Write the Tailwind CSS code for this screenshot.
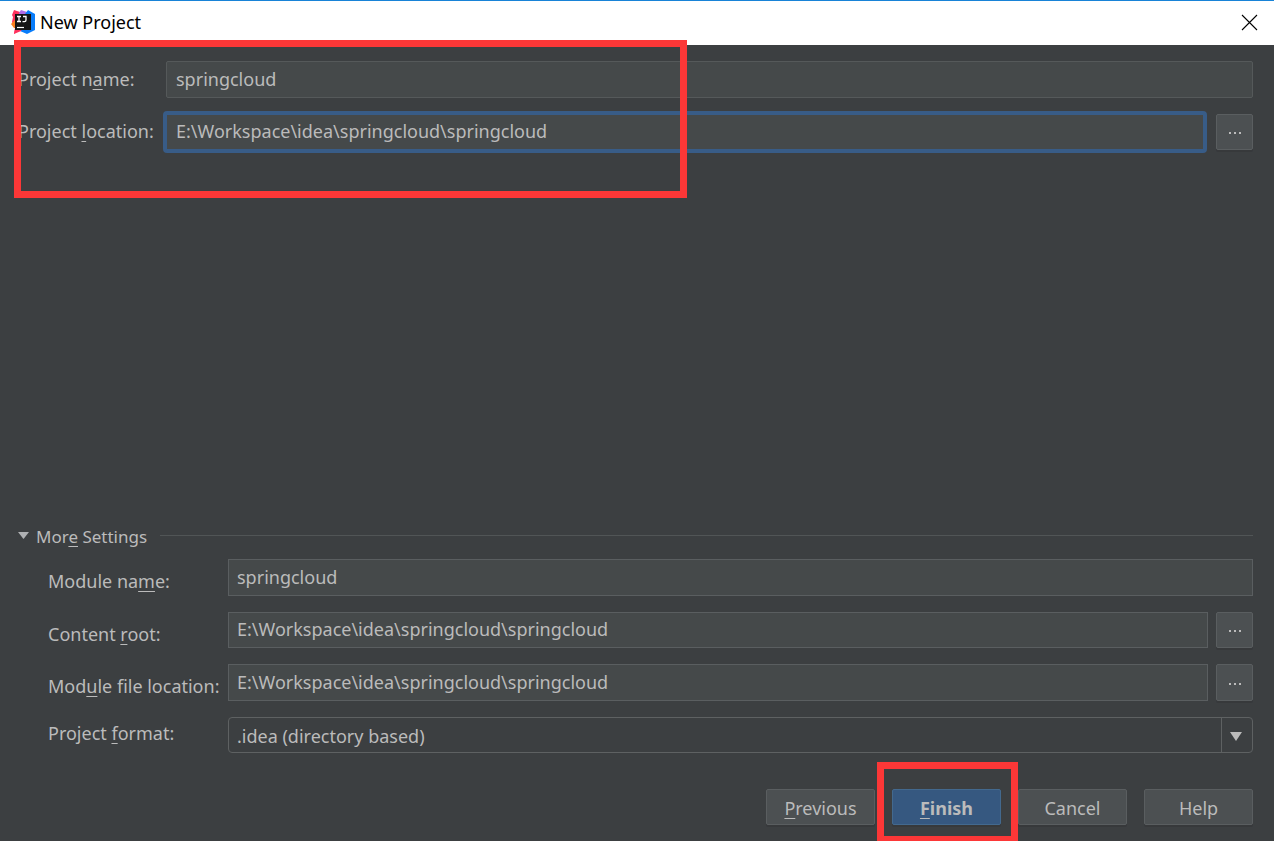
<!DOCTYPE html>
<html lang="en">
<head>
<meta charset="utf-8">
<meta name="viewport" content="width=device-width, initial-scale=1">
<title>New Project</title>
<script src="https://cdn.jsdelivr.net/npm/@tailwindcss/browser@4"></script>
</head>
<body class="relative flex min-h-screen flex-col overflow-x-hidden bg-[#3c3f41] font-['Noto_Sans','Open_Sans',sans-serif] text-[18px] leading-6 text-[#bbbbbb]">

<header class="flex h-[45px] items-center border-t border-[#1883d7] bg-white pr-4 pb-[2px] pl-[11px] text-black">
  <svg class="mr-[5px] size-6 shrink-0" viewBox="0 0 24 24" aria-hidden="true">
    <path d="M3 0 12 3V12L8 20 3 24 4 18 1 12 2 7 1 5Z" fill="#fe315d"/>
    <path d="M0 14 4 10 6 18 3 18Z" fill="#fc801d"/>
    <path d="M8 3 10 0 16 2 14 6H8Z" fill="#b06be8"/>
    <path d="M14 4 17 0 24 4V20L16 24 9 21 8 18Z" fill="#087cfa"/>
    <path d="M4 19 11 19 10 21 3 24Z" fill="#fe315d"/>
    <rect x="4" y="4" width="16" height="16" fill="#151515"/>
    <path d="M6 6.500h4M8 6.500v5M6 11.500h4M12 6.500h3v3.500q0 1.600-1.600 1.600h-1.900" fill="none" stroke="#fff" stroke-width="1.300"/>
    <path d="M6 17.500h7" stroke="#fff" stroke-width="1.200"/>
  </svg>
  <h1 class="flex-1">New Project</h1>
  <button type="button" aria-label="Close" class="flex size-[17px] items-center justify-center">
    <svg class="size-[17px]" viewBox="0 0 17 17" fill="none" stroke="#000" stroke-width="1.100" aria-hidden="true"><path d="M1 1 16 16M16 1 1 16"/></svg>
  </button>
</header>

<form class="flex flex-1 flex-col pr-[21px] pb-4 pl-[18px]">
  <section class="relative pt-4">
    <div class="flex items-center">
      <label for="name" class="w-[148px] shrink-0 pb-[2px]">Project n<u class="underline-offset-3">a</u>me:</label>
      <input id="name" value="springcloud" class="h-[37px] min-w-0 flex-1 rounded-xs border border-[#55595a] bg-[#45494a] px-[9px] pb-px outline-none">
    </div>
    <div class="mt-[13px] flex items-center">
      <label for="location" class="w-[145px] shrink-0 pb-[2px] whitespace-nowrap">Project <u class="underline-offset-3">l</u>ocation:</label>
      <input id="location" value="E:\Workspace\idea\springcloud\springcloud" class="h-[42px] min-w-0 flex-1 rounded-sm border-4 border-[#385c87] bg-[#45494a] px-[9px] pb-[2px] outline-none">
      <button type="button" aria-label="Browse project location" class="ml-[9px] flex h-[36px] w-[37px] shrink-0 items-center justify-center rounded-xs border border-[#5a5e60] bg-[#4c5052] pt-[2px] pl-px shadow-[0_2px_0_#37393b]">
        <svg class="h-[2px] w-3" viewBox="0 0 12 2" fill="#bbb" aria-hidden="true"><path d="M0 0h2v2H0zM5 0h2v2H5zM10 0h2v2h-2z"/></svg>
      </button>
    </div>
    <div aria-hidden="true" class="pointer-events-none absolute -top-[5px] -left-1 h-[158px] w-[673px] border-7 border-[#fc3737]"></div>
  </section>

  <section class="mt-auto">
    <div class="flex h-6 items-center">
      <button type="button" class="flex items-center gap-[7px] text-[17px]">
        <svg class="h-[7px] w-[11px]" viewBox="0 0 11 7" fill="#afb1b3" aria-hidden="true"><path d="M0 0h11L5.500 7z"/></svg>
        <span class="pt-[3px]">Mor<u class="underline-offset-3">e</u> Settings</span>
      </button>
      <span class="ml-[13px] h-px flex-1 bg-[#515556]"></span>
    </div>
    <div class="mt-3 grid grid-cols-[180px_1fr] gap-y-4 pl-[30px]">
      <label for="module" class="self-center pt-[6px]">Module na<u class="underline-offset-3">m</u>e:</label>
      <input id="module" value="springcloud" class="h-[37px] w-full min-w-0 border border-[#5a5e60] bg-[#45494a] px-2 pb-px outline-none">

      <label for="root" class="self-center pt-[7px]">Content <u class="underline-offset-3">r</u>oot:</label>
      <div class="flex gap-2">
        <input id="root" value="E:\Workspace\idea\springcloud\springcloud" class="h-[36px] min-w-0 flex-1 border border-[#5a5e60] bg-[#45494a] px-2 pb-[2px] outline-none">
        <button type="button" aria-label="Browse content root" class="flex h-[36px] w-[37px] shrink-0 items-center justify-center rounded-xs border border-[#5a5e60] bg-[#4c5052] pt-[2px] pl-px shadow-[0_2px_0_#37393b]">
          <svg class="h-[2px] w-3" viewBox="0 0 12 2" fill="#bbb" aria-hidden="true"><path d="M0 0h2v2H0zM5 0h2v2H5zM10 0h2v2h-2z"/></svg>
        </button>
      </div>

      <label for="file" class="self-center pt-[6px] whitespace-nowrap">Mod<u class="underline-offset-3">u</u>le file location:</label>
      <div class="flex gap-2">
        <input id="file" value="E:\Workspace\idea\springcloud\springcloud" class="h-[37px] min-w-0 flex-1 border border-[#5a5e60] bg-[#45494a] px-2 pb-px outline-none">
        <button type="button" aria-label="Browse module file location" class="flex h-[37px] w-[37px] shrink-0 items-center justify-center rounded-xs border border-[#5a5e60] bg-[#4c5052] pt-[2px] pl-px shadow-[0_2px_0_#37393b]">
          <svg class="h-[2px] w-3" viewBox="0 0 12 2" fill="#bbb" aria-hidden="true"><path d="M0 0h2v2H0zM5 0h2v2H5zM10 0h2v2h-2z"/></svg>
        </button>
      </div>

      <label for="format" class="self-center pb-1">Project <u class="underline-offset-3">f</u>ormat:</label>
      <div class="relative h-[36px]">
        <select id="format" class="h-full w-full appearance-none rounded-sm border border-[#5e6162] bg-[#3c3f41] pt-px pr-10 pl-2 outline-none">
          <option>.idea (directory based)</option>
        </select>
        <span class="pointer-events-none absolute inset-y-0 right-0 flex w-8 items-center justify-center border-l border-[#5e6162] pt-[2px] pr-[3px]">
          <svg class="h-[9px] w-3" viewBox="0 0 12 9" fill="#bbb" aria-hidden="true"><path d="M0 0h12L6 9z"/></svg>
        </span>
      </div>
    </div>
  </section>

  <footer class="mt-9 flex justify-end gap-[17px]">
    <button type="button" class="h-[36px] w-[109px] rounded-xs border border-[#5a5e60] bg-[#4c5052] pt-px shadow-[0_2px_0_#37393b]"><u class="underline-offset-3">P</u>revious</button>
    <div class="relative">
      <button type="submit" class="h-[36px] w-[109px] rounded-xs border border-[#43698e] bg-[#365880] pt-px font-bold shadow-[0_2px_0_#37393b]"><u class="underline-offset-3">F</u>inish</button>
      <div aria-hidden="true" class="pointer-events-none absolute -top-[27px] -right-[17px] -bottom-4 -left-[15px] z-10 border-7 border-b-5 border-[#fc3737]"></div>
    </div>
    <button type="button" class="h-[36px] w-[109px] rounded-xs border border-[#5a5e60] bg-[#4c5052] pt-px shadow-[0_2px_0_#37393b]">Cancel</button>
    <button type="button" class="h-[36px] w-[109px] rounded-xs border border-[#5a5e60] bg-[#4c5052] pt-px shadow-[0_2px_0_#37393b]">Help</button>
  </footer>
</form>
</body>
</html>
